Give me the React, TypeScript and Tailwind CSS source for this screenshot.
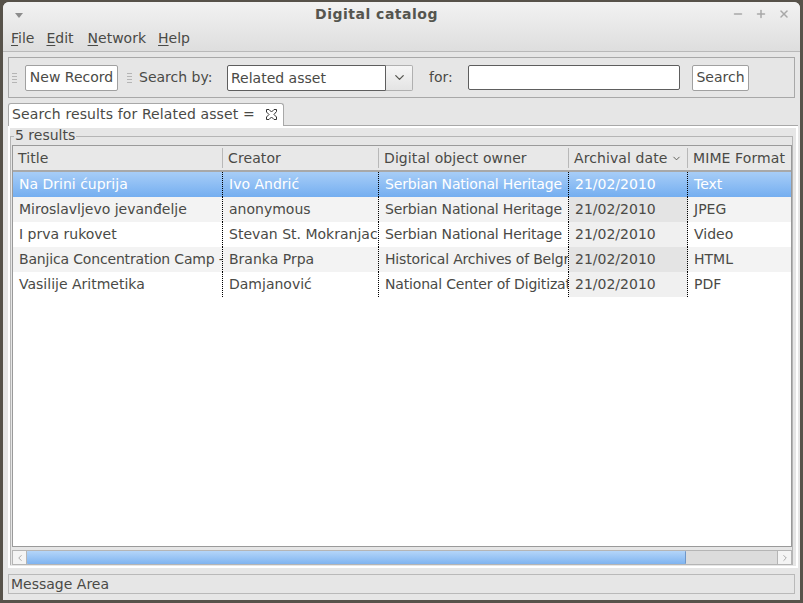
import { ChevronDown, ChevronLeft, ChevronRight, Minus, Plus, X } from "lucide-react";

const columns = [
  { title: "Title", width: "w-[210px]" },
  { title: "Creator", width: "w-[156px]" },
  { title: "Digital object owner", width: "w-[190px]" },
  { title: "Archival date", width: "w-[119px]" },
  { title: "MIME Format", width: "w-[100px]" },
];

const rows = [
  ["Na Drini ćuprija", "Ivo Andrić", "Serbian National Heritage", "21/02/2010", "Text"],
  ["Miroslavljevo jevanđelje", "anonymous", "Serbian National Heritage", "21/02/2010", "JPEG"],
  ["I prva rukovet", "Stevan St. Mokranjac", "Serbian National Heritage", "21/02/2010", "Video"],
  ["Banjica Concentration Camp - Detainees", "Branka Prpa", "Historical Archives of Belgrade", "21/02/2010", "HTML"],
  ["Vasilije Aritmetika", "Damjanović", "National Center of Digitization", "21/02/2010", "PDF"],
];

function Grip() {
  return (
    <div className="flex w-[5px] flex-col gap-[2px]">
      <div className="h-px bg-[#b5b5b5]" />
      <div className="h-px bg-[#b5b5b5]" />
      <div className="h-px bg-[#b5b5b5]" />
      <div className="h-px bg-[#b5b5b5]" />
    </div>
  );
}

function Mnemonic({ first, rest, className }: { first: string; rest: string; className: string }) {
  return (
    <span className={className}>
      <span className="underline underline-offset-2">{first}</span>
      {rest}
    </span>
  );
}

function Cell({ text, index, selected, even }: { text: string; index: number; selected: boolean; even: boolean }) {
  let bg = "";
  if (index === 3 && !selected) {
    bg = even ? "bg-[#f0f0f0]" : "bg-[#e4e4e4]";
  }
  // the long strings sit a little tighter in the picture
  const tight = index === 2 || text.startsWith("Banjica");
  return (
    <div
      className={`h-full shrink-0 overflow-hidden whitespace-nowrap pl-[6px] leading-[25px] ${columns[index].width} ${bg} ${
        index < 4 ? "border-r border-dotted border-black" : ""
      } ${tight ? "tracking-[-0.17px]" : ""}`}
    >
      {text}
    </div>
  );
}

export default function App() {
  return (
    <div className="h-[603px] w-[803px] overflow-hidden bg-[#57524a] px-[3px] pt-[2px] font-['DejaVu_Sans',sans-serif] text-[14px] text-[#4a4a46]">
      <div className="flex h-[598px] w-[797px] flex-col overflow-hidden rounded-t-[6px] bg-[#e6e6e6]">
        {/* title bar + menu */}
        <div className="h-[50px] shrink-0 border-b border-[#b9b9b9] bg-gradient-to-b from-[#f2f2f2] to-[#dedede]">
          <div className="relative flex h-[24px] items-center justify-center pr-[50px] font-bold tracking-[0.5px] text-[#55554f]">
            <div className="absolute left-[12px] top-[11px] h-0 w-0 border-x-[4px] border-t-[5px] border-x-transparent border-t-[#8c8c8c]" />
            Digital catalog
            <div className="absolute right-[10px] top-[6px] flex gap-[11px] text-[#a8a8a8]">
              <Minus size={12} strokeWidth={3} />
              <Plus size={12} strokeWidth={3} />
              <X size={12} strokeWidth={3} />
            </div>
          </div>
          <div className="flex h-[24px] items-center pl-[8px]">
            <Mnemonic first="F" rest="ile" className="mr-[12px]" />
            <Mnemonic first="E" rest="dit" className="mr-[14px]" />
            <Mnemonic first="N" rest="etwork" className="mr-[12px]" />
            <Mnemonic first="H" rest="elp" className="" />
          </div>
        </div>

        {/* toolbar */}
        <div className="ml-[5px] mr-[5px] mt-[5px] flex h-[41px] shrink-0 items-center border border-[#a8a8a8] pl-[3px]">
          <Grip />
          <button className="ml-[8px] h-[26px] w-[93px] rounded-[2px] border border-[#a0a0a0] bg-white text-center">New Record</button>
          <div className="ml-[9px]"><Grip /></div>
          <span className="ml-[7px] w-[88px]">Search by:</span>
          <div className="flex h-[26px] w-[186px] items-stretch">
            <span className="flex-1 rounded-l-[2px] border border-[#5e5e5e] bg-white pl-[3px] leading-[24px]">Related asset</span>
            <div className="flex w-[27px] items-center justify-center rounded-r-[2px] border border-l-0 border-[#b0b0b0] bg-gradient-to-b from-[#f6f6f6] to-[#e4e4e4]">
              <ChevronDown size={15} className="text-[#55554f]" />
            </div>
          </div>
          <span className="ml-[16px] w-[39px]">for:</span>
          <div className="h-[25px] w-[212px] rounded-[2px] border border-[#5e5e5e] bg-white" />
          <button className="ml-[12px] h-[26px] w-[57px] rounded-[2px] border border-[#a0a0a0] bg-white text-center">Search</button>
        </div>

        {/* tab */}
        <div className="relative z-10 ml-[5px] mt-[5px] flex h-[23px] w-[276px] shrink-0 items-center rounded-t-[3px] border border-b-0 border-[#a8a8a8] bg-white pb-[2px] pl-[3px]">
          <span className="w-[254px] tracking-[0.12px]">Search results for Related asset =</span>
          <svg width="11" height="11" viewBox="0 0 11 11" fill="none" stroke="#333" strokeWidth="1">
            <path d="M1 .5h2L5.500 3 8 .5h2.500v2L8 5.500l2.500 2.500v2.500H8L5.500 8 3 10.500H.5V8L3 5.500.5 3V.5z" />
          </svg>
        </div>

        {/* tab panel */}
        <div className="-mt-px mb-[6px] ml-[5px] mr-[2px] flex min-h-0 flex-1 flex-col border-t border-[#a8a8a8]">
          <div className="flex min-h-0 flex-1 flex-col border-2 border-white bg-[#e6e6e6] pb-px pr-[3px] pt-[8px]">
            <div className="relative flex min-h-0 flex-1 flex-col border-l border-r border-t border-[#b5b5b5] pl-px pt-[8px]">
              <span className="absolute left-[3px] top-[-9px] bg-[#e6e6e6] px-px leading-[14px]">5 results</span>

              {/* table */}
              <div className="flex min-h-0 flex-1 flex-col overflow-hidden border border-[#9a9a9a] bg-white">
                <div className="flex h-[26px] shrink-0 items-center border-b-2 border-[#a8a8a8] bg-[#e8e8e8]">
                  {columns.map((c, i) => (
                    <div
                      key={c.title}
                      className={`flex h-[20px] shrink-0 items-center gap-[3px] pl-[5px] tracking-[0.1px] ${c.width} ${i < 4 ? "border-r border-[#b8b8b8]" : ""}`}
                    >
                      {c.title}
                      {i === 3 && <ChevronDown size={11} className="text-[#55554f]" />}
                    </div>
                  ))}
                </div>
                {rows.map((row, r) => (
                  <div
                    key={row[0]}
                    className={`flex h-[25px] shrink-0 ${
                      r === 0
                        ? "bg-gradient-to-b from-[#a7cdf7] to-[#74aef0] text-white"
                        : r % 2 === 1
                          ? "bg-[#f3f3f3]"
                          : "bg-white"
                    }`}
                  >
                    {row.map((text, i) => (
                      <Cell key={i} text={text} index={i} selected={r === 0} even={r % 2 === 0} />
                    ))}
                  </div>
                ))}
              </div>

              {/* scrollbar */}
              <div className="mt-[3px] flex h-[15px] shrink-0 items-stretch border border-[#b5b5b5] bg-[#dcdcdc]">
                <div className="flex w-[14px] items-center justify-center border-r border-[#b5b5b5] bg-[#f4f4f4]">
                  <ChevronLeft size={10} className="text-[#9a9a9a]" />
                </div>
                <div className="w-[659px] rounded-[1px] border-r border-[#6f97c9] bg-gradient-to-b from-[#b4d5f9] to-[#7fb4f0]" />
                <div className="flex-1" />
                <div className="flex w-[14px] items-center justify-center border-l border-[#b5b5b5] bg-[#f4f4f4]">
                  <ChevronRight size={10} className="text-[#9a9a9a]" />
                </div>
              </div>
            </div>
          </div>
        </div>

        {/* status bar */}
        <div className="mx-[5px] mb-[6px] h-[20px] shrink-0 border border-[#b9b9b9] pl-[2px] leading-[19px]">Message Area</div>
      </div>
    </div>
  );
}
